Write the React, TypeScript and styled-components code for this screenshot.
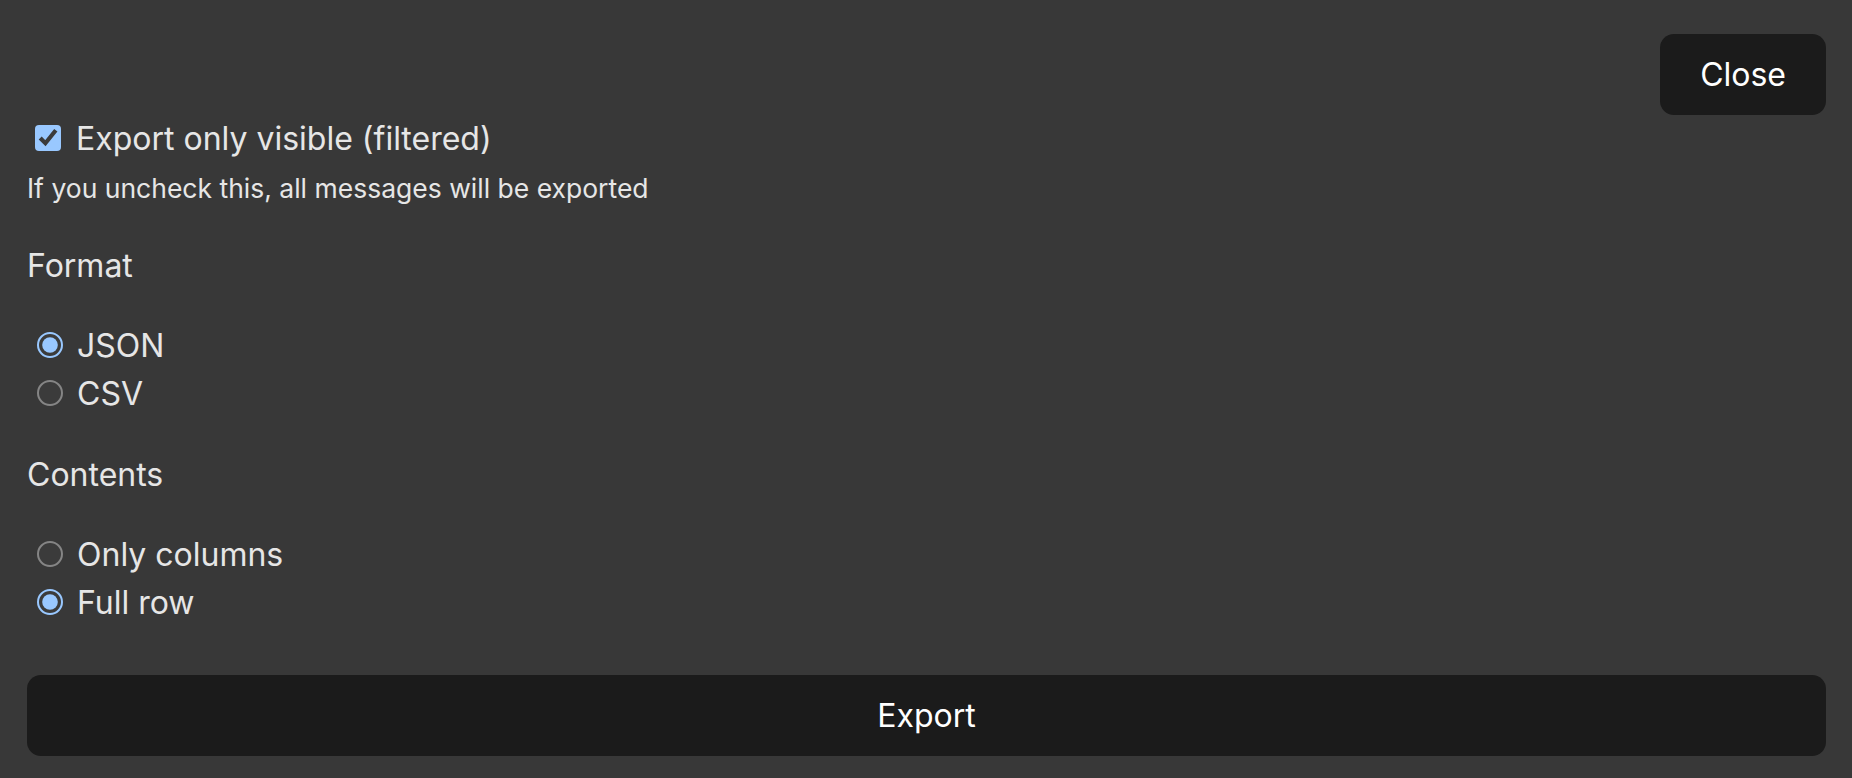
import React, {useState} from "react";
import styled, {createGlobalStyle} from "styled-components";

const GlobalStyle = createGlobalStyle`
  html, body {
    margin: 0;
    padding: 0;
    background: #383838;
    color-scheme: dark;
  }
  body {
    font-family: Inter, "Noto Sans", sans-serif;
    color: #e6e6e6;
  }
`;

const FORMATS = ["JSON", "CSV"];
const CONTENTS = ["Only columns", "Full row"];

const App = () => {
  const [onlyVisible, setOnlyVisible] = useState<boolean>(true);
  const [format, setFormat] = useState<string>("JSON");
  const [contents, setContents] = useState<string>("Full row");

  return (
    <>
      <GlobalStyle />
      <StyledPanel>
        <StyledHeader>
          <StyledButton>Close</StyledButton>
        </StyledHeader>

        <StyledCheckRow>
          <StyledCheckbox
            type="checkbox"
            checked={onlyVisible}
            onChange={() => setOnlyVisible((v) => !v)}
          />
          Export only visible (filtered)
        </StyledCheckRow>
        <StyledHint>If you uncheck this, all messages will be exported</StyledHint>

        <StyledHeading>Format</StyledHeading>
        <StyledGroup>
          {FORMATS.map((item) => (
            <StyledRadioRow key={item}>
              <StyledRadio
                type="radio"
                name="format"
                checked={format === item}
                onChange={() => setFormat(item)}
              />
              {item}
            </StyledRadioRow>
          ))}
        </StyledGroup>

        <StyledHeading>Contents</StyledHeading>
        <StyledGroup>
          {CONTENTS.map((item) => (
            <StyledRadioRow key={item}>
              <StyledRadio
                type="radio"
                name="contents"
                checked={contents === item}
                onChange={() => setContents(item)}
              />
              {item}
            </StyledRadioRow>
          ))}
        </StyledGroup>

        <StyledButton wide>Export</StyledButton>
      </StyledPanel>
    </>
  );
};

export default App;

const StyledPanel = styled.div`
  display: flex;
  flex-direction: column;
  padding: 34px 26px 0 27px;
  font-size: 32px;
`;

const StyledHeader = styled.div`
  display: flex;
  justify-content: flex-end;
`;

const StyledButton = styled.button<{wide?: boolean}>`
  height: 81px;
  padding: 0 40px;
  border: none;
  border-radius: 14px;
  background: #1b1b1b;
  color: #ffffff;
  font-family: Inter, "Noto Sans", sans-serif;
  font-size: 32px;
  font-weight: 400;
  cursor: pointer;
  width: ${(props) => (props.wide ? "100%" : "auto")};
  margin-top: ${(props) => (props.wide ? "49px" : "0")};
`;

const StyledCheckRow = styled.label`
  display: flex;
  align-items: center;
  height: 44px;
  margin-top: 1px;
`;

const StyledCheckbox = styled.input`
  zoom: 2;
  margin: 0 7.5px 0 4px;
`;

const StyledHint = styled.div`
  margin-top: 13px;
  font-size: 26.5px;
  line-height: 30px;
`;

const StyledHeading = styled.div`
  margin-top: 43px;
  line-height: 40px;
`;

const StyledGroup = styled.div`
  display: flex;
  flex-direction: column;
  margin-top: 35px;
  & + ${StyledHeading} {
    margin-top: 38px;
  }
`;

const StyledRadioRow = styled.label`
  display: flex;
  align-items: center;
  height: 48px;
`;

const StyledRadio = styled.input`
  zoom: 2;
  margin: 0 7px 0 5px;
`;
